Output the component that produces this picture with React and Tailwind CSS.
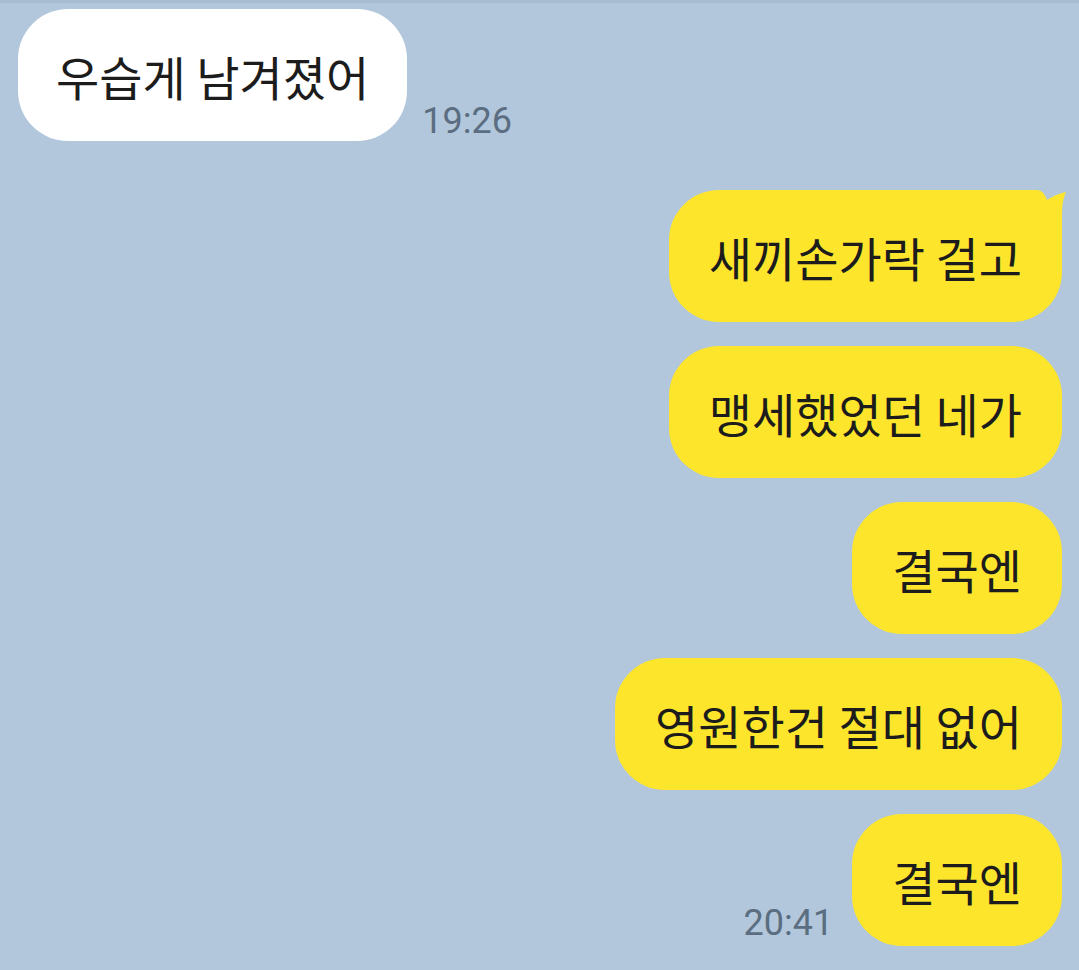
const font = { fontFamily: '"Noto Sans CJK KR", "Noto Sans", sans-serif' };
const timeFont = { fontFamily: "Roboto, sans-serif" };

const Tail = () => (
  <svg
    className="absolute top-0 -right-[6px]"
    width="58"
    height="50"
    viewBox="0 0 58 50"
  >
    <path d="M0 0 L28 0 Q34 1 37 10 Q46 4 56 2 Q52 10 52 24 L52 50 L0 50 Z" fill="#fde52c" />
  </svg>
);

const Mine = ({ text, tail, time }) => (
  <div className="flex items-end gap-[19px]">
    {time && (
      <span className="text-[36px] leading-none text-[#5b6d80] mb-[5px]" style={timeFont}>
        {time}
      </span>
    )}
    <div className="relative h-[132px] flex items-center px-[40px] rounded-[50px] bg-[#fde52c] text-[#1c1c1c] text-[47px] leading-none">
      {tail && <Tail />}
      <span className="relative">{text}</span>
    </div>
  </div>
);

export default function App() {
  return (
    <div className="w-[1079px] h-[970px] bg-[#b2c7db] overflow-hidden" style={font}>
      <div className="h-[3px] bg-[#a9bccf]" />
      <div className="flex items-end pl-[18px] pt-[6px] gap-[15px]">
        <div className="h-[132px] flex items-center px-[38px] rounded-[50px] bg-white text-[#1c1c1c] text-[47px] leading-none">
          우습게 남겨졌어
        </div>
        <span className="text-[36px] leading-none text-[#5b6d80] mb-[2px]" style={timeFont}>
          19:26
        </span>
      </div>
      <div className="flex flex-col items-end gap-[24px] pr-[17px] mt-[49px]">
        <Mine text="새끼손가락 걸고" tail />
        <Mine text="맹세했었던 네가" />
        <Mine text="결국엔" />
        <Mine text="영원한건 절대 없어" />
        <Mine text="결국엔" time="20:41" />
      </div>
    </div>
  );
}
